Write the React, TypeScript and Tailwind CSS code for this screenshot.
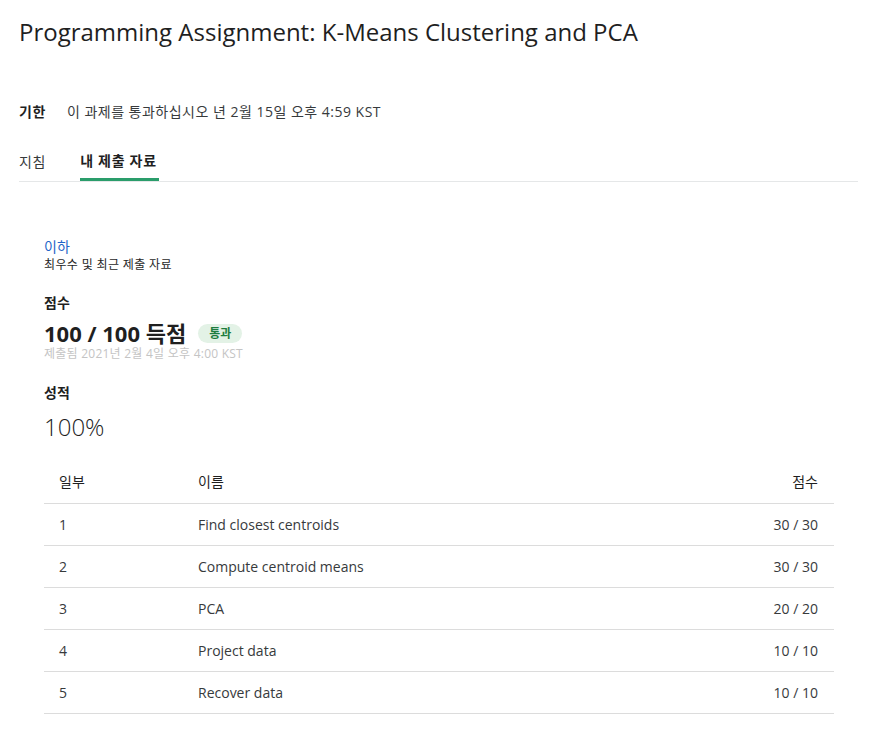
import React from 'react';

const font = { fontFamily: '"Open Sans", "Noto Sans CJK KR", sans-serif' };

const rows = [
  { part: '1', name: 'Find closest centroids', score: '30 / 30' },
  { part: '2', name: 'Compute centroid means', score: '30 / 30' },
  { part: '3', name: 'PCA', score: '20 / 20' },
  { part: '4', name: 'Project data', score: '10 / 10' },
  { part: '5', name: 'Recover data', score: '10 / 10' },
];

export default function App() {
  return (
    <div className="min-h-screen bg-white text-[#1f1f1f]" style={font}>
      <div className="px-[19px] pt-[14px] w-[877px]">
        {/* Title */}
        <h1 className="text-[24px] leading-[36px] text-[#1f1f1f]">
          Programming Assignment: K-Means Clustering and PCA
        </h1>

        {/* Deadline */}
        <div className="mt-[52px] flex items-center gap-[21px] text-[14px] leading-[20px]">
          <span className="font-bold tracking-[0.04em]">기한</span>
          <span className="text-[#373a3c] tracking-[0.035em]">이 과제를 통과하십시오 년 2월 15일 오후 4:59 KST</span>
        </div>

        {/* Tabs */}
        <div className="mt-[28px] flex border-b border-[#e5e7e8] text-[14px] tracking-[0.05em]">
          <div className="pb-[9px] pt-[1px] pr-[34px] text-[#373a3c]">지침</div>
          <div className="pb-[7px] pt-[1px] font-bold border-b-[3px] border-[#2a9d6b] leading-[20px] pr-[2px]">
            내 제출 자료
          </div>
        </div>

        {/* Submission */}
        <div className="pl-[25px] pt-[55px]">
          <div className="text-[14px] leading-[20px] text-[#1e64c8]">이하</div>
          <div className="text-[12px] leading-[16px] text-[#1f1f1f] tracking-[0.03em]">최우수 및 최근 제출 자료</div>

          <div className="mt-[20px] text-[14px] font-bold leading-[20px]">점수</div>
          <div className="mt-[8px] flex items-center gap-[12px]">
            <span className="text-[22px] font-bold leading-[24px]">100 / 100 득점</span>
            <span className="rounded-full bg-[#e3f2e6] px-[11px] text-[12px] leading-[19px] text-[#1e7d3f] font-semibold">
              통과
            </span>
          </div>
          <div className="mt-[1px] text-[12px] leading-[16px] text-[#c4c4c4] tracking-[0.02em]">제출됨 2021년 2월 4일 오후 4:00 KST</div>

          <div className="mt-[21px] text-[14px] font-bold leading-[20px]">성적</div>
          <div className="mt-[8px] text-[24px] leading-[32px] font-light text-[#1f1f1f]">100%</div>

          {/* Table */}
          <table className="mt-[18px] w-[790px] text-[14px] text-[#373a3c]">
            <thead>
              <tr className="border-b border-[#dcdcdc]">
                <th className="h-[42px] pl-[15px] w-[154px] text-left font-normal text-[#1f1f1f]">일부</th>
                <th className="h-[42px] text-left font-normal text-[#1f1f1f]">이름</th>
                <th className="h-[42px] pr-[16px] text-right font-normal text-[#1f1f1f]">점수</th>
              </tr>
            </thead>
            <tbody>
              {rows.map((r) => (
                <tr key={r.part} className="border-b border-[#dcdcdc]">
                  <td className="h-[42px] pl-[15px]">{r.part}</td>
                  <td className="h-[42px]">{r.name}</td>
                  <td className="h-[42px] pr-[16px] text-right">{r.score}</td>
                </tr>
              ))}
            </tbody>
          </table>
        </div>
      </div>
    </div>
  );
}
